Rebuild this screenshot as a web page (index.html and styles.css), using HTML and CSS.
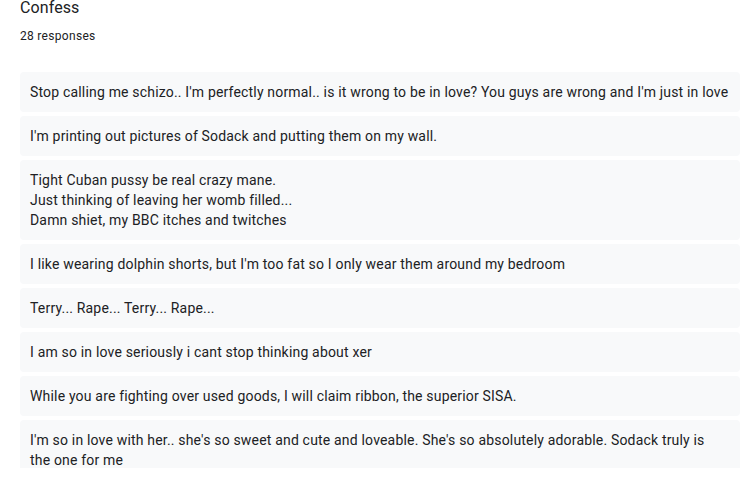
FILE: index.html
```html
<!DOCTYPE html>
<html>
<head>
<meta charset="utf-8">
<link rel="stylesheet" href="styles.css">
</head>
<body>
<div class="page">
  <div class="title">Confess</div>
  <div class="count">28 responses</div>
  <div class="list">
    <div class="resp">Stop calling me schizo.. I'm perfectly normal.. is it wrong to be in love? You guys are wrong and I'm just in love</div>
    <div class="resp">I'm printing out pictures of Sodack and putting them on my wall.</div>
    <div class="resp">Tight Cuban pussy be real crazy mane.<br>Just thinking of leaving her womb filled...<br>Damn shiet, my BBC itches and twitches</div>
    <div class="resp">I like wearing dolphin shorts, but I'm too fat so I only wear them around my bedroom</div>
    <div class="resp">Terry... Rape... Terry... Rape...</div>
    <div class="resp">I am so in love seriously i cant stop thinking about xer</div>
    <div class="resp">While you are fighting over used goods, I will claim ribbon, the superior SISA.</div>
    <div class="resp">I'm so in love with her.. she's so sweet and cute and loveable. She's so absolutely adorable. Sodack truly is<br>the one for me</div>
  </div>
</div>
</body>
</html>
```
FILE: styles.css
```css
html, body {
  margin: 0;
  padding: 0;
  background: #fff;
}
.page {
  font-family: Roboto, "Liberation Sans", sans-serif;
  color: #202124;
  padding: 0 4px 0 20px;
}
.title {
  font-size: 16px;
  line-height: 16px;
  letter-spacing: 0.1px;
}
.count {
  font-size: 12px;
  line-height: 16px;
  letter-spacing: 0.3px;
  margin-top: 12px;
  margin-bottom: 28px;
}
.list {
  display: flex;
  flex-direction: column;
  gap: 4px;
  height: 396px;
  overflow: hidden;
}
.resp {
  background: #f8f9fa;
  border-radius: 4px;
  padding: 10px 8px 10px 10px;
  font-size: 14px;
  line-height: 20px;
  letter-spacing: 0.18px;
  flex-shrink: 0;
}
```
